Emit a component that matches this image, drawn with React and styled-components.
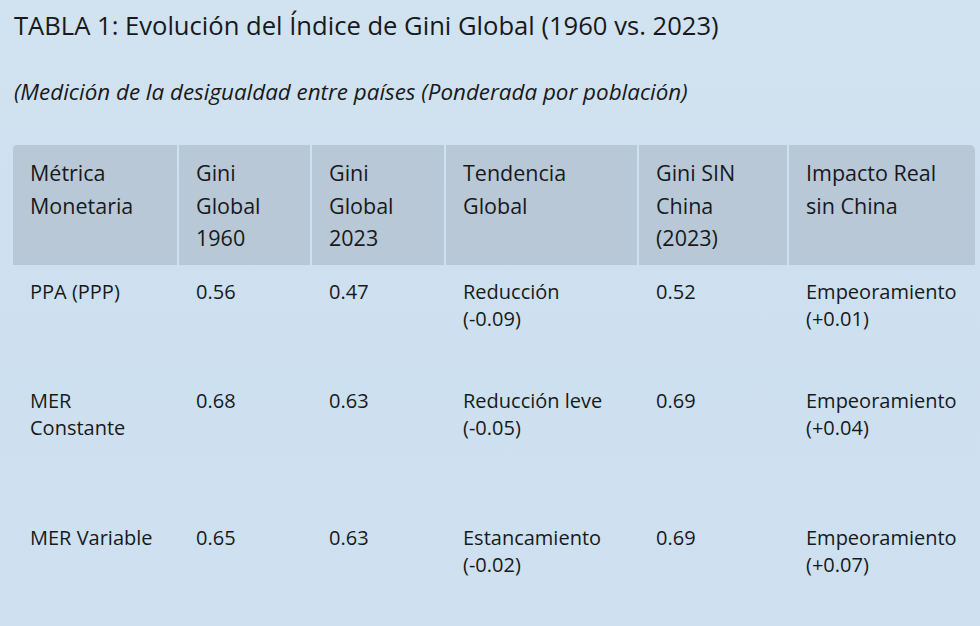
import React from "react";
import styled, { createGlobalStyle } from "styled-components";

const GlobalStyle = createGlobalStyle`
  html, body {
    margin: 0;
    padding: 0;
    background: #cfe0ef;
  }
  body {
    font-family: "Open Sans", Roboto, "Liberation Sans", sans-serif;
    color: #18191c;
  }
`;

const COLS = "164px 131px 132px 191px 148px 186px";

const headers = [
  ["Métrica", "Monetaria"],
  ["Gini", "Global", "1960"],
  ["Gini", "Global", "2023"],
  ["Tendencia", "Global"],
  ["Gini SIN", "China", "(2023)"],
  ["Impacto Real", "sin China"],
];

const rows = [
  { height: 109, cells: [["PPA (PPP)"], ["0.56"], ["0.47"], ["Reducción", "(-0.09)"], ["0.52"], ["Empeoramiento", "(+0.01)"]] },
  { height: 137, cells: [["MER", "Constante"], ["0.68"], ["0.63"], ["Reducción leve", "(-0.05)"], ["0.69"], ["Empeoramiento", "(+0.04)"]] },
  { height: 116, cells: [["MER Variable"], ["0.65"], ["0.63"], ["Estancamiento", "(-0.02)"], ["0.69"], ["Empeoramiento", "(+0.07)"]] },
];

export default function App() {
  return (
    <>
      <GlobalStyle />
      <Page>
        <Title>TABLA 1: Evolución del Índice de Gini Global (1960 vs. 2023)</Title>
        <Subtitle>(Medición de la desigualdad entre países (Ponderada por población)</Subtitle>
        <Table>
          <HeadRow>
            {headers.map((h, i) => (
              <HeadCell key={i} first={i === 0} last={i === headers.length - 1}>
                {h.map((line, k) => (
                  <Line key={k}>{line}</Line>
                ))}
              </HeadCell>
            ))}
          </HeadRow>
          {rows.map((r, i) => (
            <BodyRow key={i} h={r.height}>
              {r.cells.map((c, j) => (
                <Cell key={j}>
                  {c.map((line, k) => (
                    <Line key={k}>{line}</Line>
                  ))}
                </Cell>
              ))}
            </BodyRow>
          ))}
        </Table>
      </Page>
    </>
  );
}

const Page = styled.div`
  width: 980px;
  height: 626px;
  box-sizing: border-box;
  padding: 10px 5px 0 13px;
  overflow: hidden;
  background: linear-gradient(180deg, #d1e2f0 0%, #cde0ef 60%, #cfe1f0 100%);
`;

const Title = styled.h1`
  margin: 0 0 0 1px;
  font-size: 25.6px;
  font-weight: 400;
  line-height: 32px;
  white-space: nowrap;
`;

const Subtitle = styled.p`
  margin: 36px 0 0 1px;
  font-size: 22.4px;
  font-style: italic;
  line-height: 28px;
  white-space: nowrap;
`;

const Table = styled.div`
  margin-top: 39px;
  display: flex;
  flex-direction: column;
`;

const HeadRow = styled.div`
  display: grid;
  grid-template-columns: ${COLS};
  column-gap: 2px;
  height: 119px;
`;

const HeadCell = styled.div`
  background: #b9c8d6;
  padding: 12px 4px 10px 17px;
  font-size: 21.5px;
  line-height: 32.5px;
  border-top-left-radius: ${(p) => (p.first ? "4px" : "0")};
  border-top-right-radius: ${(p) => (p.last ? "5px" : "0")};
`;

const BodyRow = styled.div`
  display: grid;
  grid-template-columns: ${COLS};
  column-gap: 2px;
  height: ${(p) => p.h}px;
`;

const Cell = styled.div`
  padding: 14px 2px 0 17px;
  font-size: 20px;
  line-height: 27px;
`;

const Line = styled.div`
  white-space: nowrap;
`;
